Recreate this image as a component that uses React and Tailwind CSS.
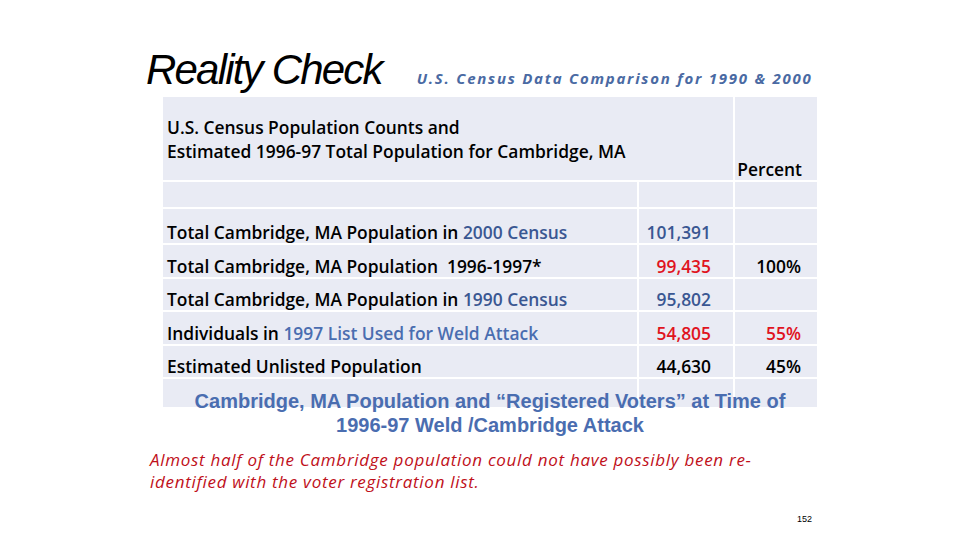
export default function App() {
  const blue = "text-[#3a5792]";
  const red = "text-[#e0141e]";
  const cell = "bg-[#e9ebf4]";
  const rows = [
    { h: "h-[34px]", label: <>Total Cambridge, MA Population in <span className={blue}>2000 Census</span></>, num: "101,391", numC: blue, pct: "", pctC: "" },
    { h: "h-[32px]", label: <>Total Cambridge, MA Population&nbsp; 1996-1997*</>, num: "99,435", numC: red, pct: "100%", pctC: "text-black" },
    { h: "h-[31px]", label: <>Total Cambridge, MA Population in <span className={blue}>1990 Census</span></>, num: "95,802", numC: blue, pct: "", pctC: "" },
    { h: "h-[32px]", label: <>Individuals in <span className="text-[#4a6db0]">1997 List Used for Weld Attack</span></>, num: "54,805", numC: red, pct: "55%", pctC: red },
    { h: "h-[31px]", label: <>Estimated Unlisted Population</>, num: "44,630", numC: "text-black", pct: "45%", pctC: "text-black" },
  ];
  return (
    <div className="w-[960px] h-[540px] bg-white overflow-hidden text-black">
      <div className="flex items-baseline pl-[146px] pt-[46px] h-[97px]">
        <div className="font-['Liberation_Sans',sans-serif] italic text-[42px] leading-[48px] tracking-[-1.8px]">Reality Check</div>
        <div className="ml-[35px] font-['Open_Sans',sans-serif] italic font-bold text-[15px] tracking-[1.75px] text-[#4a6aa3]">U.S. Census Data Comparison for 1990 &amp; 2000</div>
      </div>
      <div className="ml-[163px] w-[654px]">
        <div className="grid grid-cols-[474px_94px_82px] gap-[2px] font-['Open_Sans',sans-serif] font-semibold text-[17.4px] leading-[20px]">
          <div className={`col-span-2 h-[83px] ${cell} pl-[4px] pt-[18px] leading-[24px]`}>
            U.S. Census Population Counts and<br />Estimated 1996-97 Total Population for Cambridge, MA
          </div>
          <div className={`h-[83px] ${cell} flex items-end justify-end pr-[15px] pb-[1px]`}>Percent</div>
          <div className={`h-[25px] ${cell}`}></div>
          <div className={`h-[25px] ${cell}`}></div>
          <div className={`h-[25px] ${cell}`}></div>
          {rows.map((r, i) => (
            <div key={i} className="contents">
              <div className={`${r.h} ${cell} flex items-end pl-[4px] pb-[1px]`}><span>{r.label}</span></div>
              <div className={`${r.h} ${cell} flex items-end justify-end pr-[22px] pb-[1px] ${r.numC}`}>{r.num}</div>
              <div className={`${r.h} ${cell} flex items-end justify-end pr-[16px] pb-[1px] ${r.pctC}`}>{r.pct}</div>
            </div>
          ))}
          <div className={`h-[28px] ${cell}`}></div>
          <div className={`h-[28px] ${cell}`}></div>
          <div className={`h-[28px] ${cell}`}></div>
        </div>
        <div className="relative -mt-[18px] text-center font-['Liberation_Sans',sans-serif] font-bold text-[20px] leading-[24px] text-[#4a6db0]">
          Cambridge, MA Population and “Registered Voters” at Time of<br />1996-97 Weld /Cambridge Attack
        </div>
      </div>
      <div className="ml-[150px] mt-[12px] font-['Open_Sans',sans-serif] italic text-[17px] leading-[22px] tracking-[0.7px] text-[#c0101a]">
        Almost half of the Cambridge population could not have possibly been re-<br />identified with the voter registration list.
      </div>
      <div className="ml-[797px] mt-[20px] font-['Liberation_Sans',sans-serif] text-[9px] leading-[12px]">152</div>
    </div>
  );
}
